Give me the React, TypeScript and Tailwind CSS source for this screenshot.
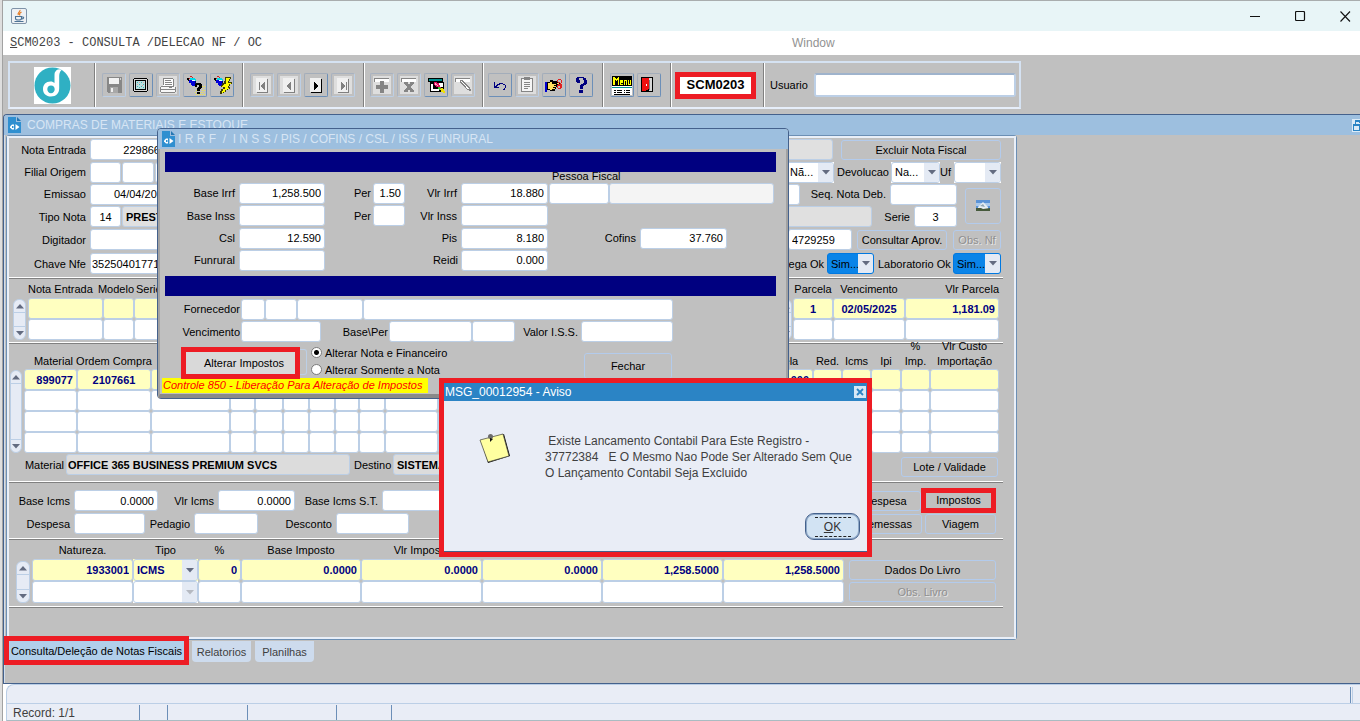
import type { ReactNode } from "react";

const NAVY = "#000080";

/* ---------- form primitives ---------- */

type FieldProps = { label: string; value?: string; className?: string };

function Field({ label, value = "", className = "" }: FieldProps) {
  return (
    <input
      type="text"
      aria-label={label}
      defaultValue={value}
      className={`h-[21px] min-w-0 shrink-0 rounded-[3px] border border-[#bccfe6] px-[3px] outline-none ${
        className.includes("bg-") ? "" : "bg-white"
      } ${className}`}
    />
  );
}

function Caption({ children, className = "" }: { children: ReactNode; className?: string }) {
  return <span className={`shrink-0 whitespace-nowrap ${className}`}>{children}</span>;
}

function FormButton({ children, className = "", disabled = false }: { children: ReactNode; className?: string; disabled?: boolean }) {
  return (
    <button
      type="button"
      disabled={disabled}
      className={`h-[20px] shrink-0 overflow-hidden whitespace-nowrap rounded-[3px] border border-[#b3cbec] text-center leading-[18px] ${
        disabled ? "text-[#8f8f8f] [text-shadow:1px_1px_0_#e6e6e6]" : ""
      } ${className}`}
    >
      {children}
    </button>
  );
}

function Arrow({ up = false, faded = false }: { up?: boolean; faded?: boolean }) {
  return (
    <svg width="8" height="5" viewBox="0 0 8 5" className="block" aria-hidden="true">
      <path d={up ? "M0 4.5h8L4 0z" : "M0 0h8L4 4.5z"} fill={faded ? "#b5b9c1" : "#636b80"} />
    </svg>
  );
}

type ComboProps = { label: string; value?: string; className?: string; selected?: boolean; faded?: boolean };

function Combo({ label, value = "", className = "", selected = false, faded = false }: ComboProps) {
  return (
    <span
      className={`flex h-[21px] shrink-0 overflow-hidden rounded-[3px] border ${
        selected ? "border-[#0078e0] bg-[#0a84e8]" : "border-[#bccfe6] bg-inherit"
      } ${className}`}
    >
      <select aria-label={label} className="min-w-0 flex-1 appearance-none bg-transparent pl-[3px] outline-none">
        <option>{value}</option>
      </select>
      <span className="pointer-events-none flex w-[15px] items-center justify-center bg-[#e4eaf4]">
        <Arrow faded={faded} />
      </span>
    </span>
  );
}

function Scroller({ className = "" }: { className?: string }) {
  return (
    <div className={`flex shrink-0 flex-col items-stretch rounded-[6px] border border-[#bccfe6] bg-[#e6ebf5] ${className}`}>
      <button type="button" aria-label="Anterior" className="flex h-[13px] items-center justify-center border-b border-[#bccfe6]">
        <Arrow up />
      </button>
      <span className="flex-1" />
      <button type="button" aria-label="Proximo" className="flex h-[13px] items-center justify-center border-t border-[#bccfe6]">
        <Arrow />
      </button>
    </div>
  );
}

function Divider() {
  return <div className="mr-[11px] h-[2px] border-t border-b border-t-white border-b-[#808080]" />;
}

/* ---------- data grid ---------- */

type Column = { title: ReactNode; width: string; head?: string; align?: string; value?: string; combo?: boolean };

type GridProps = { name: string; columns: Column[]; rows: number; headClass: string; rowClass: string; cellClass: string };

function Grid({ name, columns, rows, headClass, rowClass, cellClass }: GridProps) {
  return (
    <table aria-label={name} className="w-[1px] shrink-0 table-fixed border-collapse">
      <thead>
        <tr>
          {columns.map((c, i) => (
            <th key={i} className={`p-0 align-bottom font-normal ${c.width}`}>
              <span className={`flex items-end whitespace-nowrap ${headClass} ${c.head ?? "justify-center"}`}>{c.title}</span>
            </th>
          ))}
        </tr>
      </thead>
      <tbody>
        {Array.from({ length: rows }, (_, r) => (
          <tr key={r} className={rowClass}>
            {columns.map((c, i) => (
              <td key={i} className="p-0">
                {c.combo ? (
                  <span className={`block font-bold text-[#000080] ${r === 0 ? "bg-[#ffffc0]" : "bg-white"}`}>
                    <Combo label={`${name} ${i + 1}`} value={r === 0 ? c.value : ""} className={`w-full ${cellClass}`} faded={r > 0} />
                  </span>
                ) : (
                  <Field
                    label={`${name} ${r + 1}.${i + 1}`}
                    value={r === 0 ? c.value : ""}
                    className={`block w-full font-bold text-[#000080] ${cellClass} ${c.align ?? "text-right"} ${
                      r === 0 ? "bg-[#ffffc0]" : "bg-white"
                    }`}
                  />
                )}
              </td>
            ))}
          </tr>
        ))}
      </tbody>
    </table>
  );
}

/* ---------- toolbar ---------- */

function ToolButton({ label, children, off = false }: { label: string; children: ReactNode; off?: boolean }) {
  return (
    <button
      type="button"
      aria-label={label}
      className={`size-[24px] shrink-0 rounded-[2px] border ${
        off
          ? "border-t-[#a8b2c0] border-r-[#bccfe6] border-b-[#bccfe6] border-l-[#a8b2c0]"
          : "border-t-[#a3adba] border-r-[#6c8fb8] border-b-[#6c8fb8] border-l-[#a3adba]"
      }`}
    >
      <svg width="22" height="22" viewBox="0 0 22 22" shapeRendering="crispEdges" className="block" aria-hidden="true">
        {children}
      </svg>
    </button>
  );
}

function ToolGroup({ children, className = "" }: { children: ReactNode; className?: string }) {
  return (
    <div className={`flex h-full shrink-0 items-center gap-[3px] border-l border-[#808080] shadow-[inset_1px_0_0_#ffffff] ${className}`}>
      {children}
    </div>
  );
}

const Plate = () => <path d="M2 2h18v18H2z" fill="#dedede" />;

function NavGlyph({ d, active = false }: { d: string; active?: boolean }) {
  return (
    <>
      {!active && <Plate />}
      <path d="M5 4h11v14H5z" fill="#f0f0f0" />
      <path d="M16 5h1v14H6v-1h10z" fill={active ? "#000" : "#808080"} />
      <path d={d} fill={active ? "#000" : "#808080"} />
    </>
  );
}

function Dropper() {
  return (
    <>
      <path d="M6 2h2v1H6zM4 4h2v1H4zM8 3h1v1H8z" fill="#d02020" />
      <path d="M3 4h2v2H3zM4 6h2v1H4z" fill="#000" />
      <path d="M6 4h5v1h1v2h-1V6H8v1H6z" fill="#00d8e8" />
      <path d="M5 6h3v1h3v1h1v3h-1v1H8v-1H7V9H5z" fill="#0000d8" />
      <path d="M8 6h3v1H8z" fill="#f4ffff" />
      <path d="M11 7h1v4h-1z" fill="#000060" />
    </>
  );
}

function Toolbar() {
  return (
    <div className="mr-auto flex h-[48px] w-full max-w-[1013px] items-center border-2 border-[#d5e2f2] border-b-[#e6eefa]">
      <div className="flex h-full w-[84px] shrink-0 items-center justify-center">
        <svg width="37" height="37" viewBox="0 0 37 37" aria-label="Logo">
          <path d="M0 0h37v37H0z" fill="#fff" />
          <circle cx="18.500" cy="18.500" r="18" fill="#2fb0c3" />
          <path d="M21.500 4.500c1.500-2.500 4-3 6-1.500-2 2-2.300 4-2.300 7v11c0 5.500-3 8.500-8.200 8.500-4.800 0-8-3-8-7.300 0-4.700 3-7.700 7.500-7.700 1.800 0 3 .6 4 1.500V9c0-2.500 0-3.500 1-4.500z" fill="#fff" />
          <path d="M17 18.500c2.300 0 3.700 1.400 3.700 3.800S19.200 26.200 17 26.200s-3.700-1.500-3.700-3.900 1.400-3.800 3.700-3.800z" fill="#2fb0c3" />
        </svg>
      </div>
      <ToolGroup className="w-[148px] pl-[7px]">
        <ToolButton label="Salvar" off>
          <path d="M4 3h15v16H5v-1H4z" fill="#878787" />
          <path d="M6 4h10v6H6z" fill="#f2f2f2" />
          <path d="M17 4h1v2h-1z" fill="#d0d0d0" />
          <path d="M7 13h8v6H7z" fill="#a8a8a8" />
          <path d="M8 14h2v4H8z" fill="#efefef" />
        </ToolButton>
        <ToolButton label="Tela">
          <path d="M4 4h13v1h1v12h-1v1H4v-1H3V5h1z" fill="#000" />
          <path d="M4 5h13v12H4z" fill="#d8d8d8" />
          <path d="M5 6h11v10H5z" fill="#000" />
          <path d="M6 7h9v8H6z" fill="#b8dede" />
          <path d="M7 8h1v1H7zM9 10h1v1H9zM11 8h1v1h-1zM13 10h1v1h-1zM7 12h1v1H7zM11 12h1v1h-1zM9 13h1v1H9zM13 13h1v1h-1z" fill="#48b0b0" />
          <path d="M9 8h1v1H9zM12 11h1v1h-1zM7 10h1v1H7zM13 8h1v1h-1z" fill="#e0a0a0" />
        </ToolButton>
        <ToolButton label="Imprimir" off>
          <Plate />
          <path d="M6 4h10l1 8H6z" fill="#fff" />
          <path d="M6 4h10v1h1v7h-1V5H7v6H6zM8 6h6v1H8zM8 8h7v1H8zM8 10h7v1H8z" fill="#858585" />
          <path d="M4 12h14v1h1v4h-1v2H4z" fill="#f7f7f7" />
          <path d="M4 12h13v1H4zM3 15h15v1H3zM18 13h1v5h-1zM4 18h14v1H4zM3 13h1v5H3zM12 13h3v1h-3z" fill="#858585" />
        </ToolButton>
        <ToolButton label="Entrar consulta">
          <Dropper />
          <path d="M12 12h1v1h-1zM18 12h1v1h-1zM19 14h1v1h-1zM18 16h1v1h-1zM19 18h1v1h-1zM12 16h1v1h-1zM11 18h1v1h-1zM12 20h1v1h-1zM14 20h1v1h-1zM16 20h1v1h-1zM18 20h1v1h-1zM17 18h1v1h-1zM20 12h1v1h-1zM20 16h1v1h-1zM20 20h1v1h-1z" fill="#f0e840" />
          <path d="M12 9h5v1h1v4h-1v1h-1v2h-3v-3h1v-1h1v-2h-2v2h-2v-3h1zM13 18h3v2h-3z" fill="#000" />
        </ToolButton>
        <ToolButton label="Executar consulta">
          <Dropper />
          <path d="M14 3h6v2h-1v2h-1v1h3v2h-2v2h-1v1h1v2h-2v1h-2v2h-2v1h-2v1H9v-3h1v-2h2v-2h-2v-2h1V9h2V7h1z" fill="#404000" />
          <path d="M15 4h4v1h-1v2h-1v2h3v1h-2v2h-1v2h1v1h-2v1h-2v2h-2v1h-1v-2h1v-2h2v-2h-3v-1h1v-1h1v-1h2z" fill="#ffff00" />
        </ToolButton>
      </ToolGroup>
      <ToolGroup className="w-[121px] pl-[7px]">
        <ToolButton label="Primeiro" off>
          <NavGlyph d="M8 8h1v8H8zM13 8h1v8h-1v-1h-1v-1h-1v-1h-1v-2h1v-1h1V9h1z" />
        </ToolButton>
        <ToolButton label="Registro anterior" off>
          <NavGlyph d="M12 8h1v8h-1v-1h-1v-1h-1v-1H9v-2h1v-1h1V9h1z" />
        </ToolButton>
        <ToolButton label="Registro seguinte">
          <NavGlyph active d="M9 8h1v1h1v1h1v1h1v2h-1v1h-1v1h-1v1H9z" />
        </ToolButton>
        <ToolButton label="Ultimo" off>
          <NavGlyph d="M9 8h1v1h1v1h1v1h1v2h-1v1h-1v1h-1v1H9zM14 8h1v8h-1z" />
        </ToolButton>
      </ToolGroup>
      <ToolGroup className="w-[119px] pl-[6px]">
        <ToolButton label="Inserir" off>
          <Plate />
          <path d="M3 4h15v4H3z" fill="#fff" />
          <path d="M3 4h15v1H4v3H3zM9 7h4v4h4v4h-4v4H9v-4H5v-4h4z" fill="#858585" />
        </ToolButton>
        <ToolButton label="Remover" off>
          <Plate />
          <path d="M3 4h15v4H3z" fill="#fff" />
          <path d="M3 4h15v1H4v3H3zM6 8h4v2h2V8h4v2h-1v1h-1v1h-1v2h1v1h1v1h1v2h-4v-2h-2v2H6v-2h1v-1h1v-1h1v-2H8v-1H7v-1H6z" fill="#858585" />
        </ToolButton>
        <ToolButton label="Limpar registro">
          <path d="M3 4h15v4H3zM5 8h14v10H5z" fill="#000" />
          <path d="M4 5h13v2H4z" fill="#009090" />
          <path d="M6 10h2v5H6zM14 9h4v4h-4zM6 15h8v2H6z" fill="#fff" />
          <path d="M9 8h3v1h2v2h1v2h1v1h-3v-1h-2v-1h-1v-1H9z" fill="#e01060" />
          <path d="M10 9h1v1h1v1h1v1h-1v-1h-2z" fill="#ffb0d0" />
          <path d="M13 13h2v1h1v2h-2v-1h-1z" fill="#30c030" />
          <path d="M16 14h2v1h1v2h1v2h-2v-1h-2v-2h-1v-1h1z" fill="#f0e000" />
        </ToolButton>
        <ToolButton label="Limpar tela" off>
          <Plate />
          <path d="M3 4h15v4H3z" fill="#fff" />
          <path d="M3 4h15v1H4v3H3zM8 6h3v1h1v1h1v1h1v1h1v1h1v1h1v1h1v2h1v2h-2v-1h-2v-1h-1v-1h-1v-1h-1v-1h-1v-1h-1v-1h-1V9H8z" fill="#858585" />
          <path d="M9 7h1v1h1v1h1v1h1v1h1v1h-1v-1h-1v-1h-1V9h-1V8H9zM14 12h1v1h1v1h1v1h-2v-1h-1z" fill="#fff" />
        </ToolButton>
      </ToolGroup>
      <ToolGroup className="w-[120px] pl-[5px]">
        <ToolButton label="Desfazer">
          <path d="M5 8h1v4h1v-1h1v-1h2V9h4v1h2v1h1v3h-1v2h-2v-1h1v-1h1v-3h-2v-1h-3v1H9v1H8v1h2v1H5z" fill={NAVY} />
        </ToolButton>
        <ToolButton label="Lista de valores" off>
          <Plate />
          <path d="M5 4h12v14H5z" fill="#858585" />
          <path d="M6 5h10v12H6z" fill="#f5f5f5" />
          <path d="M8 3h6v3H8zM8 8h6v1H8zM8 10h6v1H8zM8 12h6v1H8zM8 14h4v1H8z" fill="#858585" />
        </ToolButton>
        <ToolButton label="Editar">
          <path d="M2 8h2v10H2z" fill="#0000d0" />
          <path d="M4 8h3V6h3v1h5v2h2v2h-3v2h-1v2h-1v2H7v-1H4z" fill="#000" />
          <path d="M5 9h2V8h2v2h5V9h2v1h-3v1h-2v1h2v1h-3v1h2v1h-3v1H7v-1H5z" fill="#ffe060" />
          <path d="M15 5h3v1h1v3h-1v1h1v4h-1v1h-3v-1h-1v-3h1v-1h2v-1h-2V8h-1V6h1z" fill="#e02020" />
          <path d="M15 6h3v3h-1V8h-2zM15 12h2v2h-2z" fill="#c0c0c0" />
        </ToolButton>
        <ToolButton label="Ajuda">
          <path d="M7 3h7v1h2v2h1v4h-1v1h-2v1h-1v3h-3v-4h1v-1h2V9h1V6h-1V4H9v2h1v3H7V8H6V4h1zM9 16h4v3H9z" fill={NAVY} />
        </ToolButton>
      </ToolGroup>
      <ToolGroup className="w-[68px] pl-[7px]">
        <ToolButton label="Menu">
          <path d="M1 2h20v10H1z" fill="#000" />
          <path d="M2 3h2v1h1v1h1V4h1V3h1v8H7V6H6v1H5V6H4v5H2zM9 6h3v3h-2v1h2v1H9zM13 6h3v5h-1V7h-1v4h-1zM17 6h1v4h1V6h1v5h-3z" fill="#ffff00" />
          <path d="M1 12h20v1H1z" fill="#fff" />
          <path d="M1 13h20v1H1z" fill="#009090" />
          <path d="M1 14h20v7H1z" fill="#fff" />
          <path d="M3 16h2v1H3zM6 16h5v1H6zM13 16h1v1h-1zM15 16h4v1h-4zM3 18h2v1H3zM6 18h5v1H6zM13 18h1v1h-1zM15 18h4v1h-4zM3 20h16v1H3z" fill="#000" />
        </ToolButton>
        <ToolButton label="Sair">
          <path d="M3 3h12v15H3z" fill="#000" />
          <path d="M4 4h7v11h-1v1H8v1H4z" fill="#f01010" />
          <path d="M11 4h3v13h-3z" fill="#d8d8d8" />
          <path d="M8 10h1v2H8z" fill="#fff" />
          <path d="M11 6h1v10h-1z" fill="#808080" />
        </ToolButton>
      </ToolGroup>
      <ToolGroup className="w-[93px] pl-[4px]">
        <strong className="flex h-[27px] w-[81px] items-center justify-center border-[5px] border-[#ed1c24] bg-white text-[13px]">SCM0203</strong>
      </ToolGroup>
      <ToolGroup className="flex-1 pr-[3px] pl-[6px]">
        <label htmlFor="usuario" className="w-[41px]">
          Usuario
        </label>
        <input id="usuario" type="text" className="h-[24px] min-w-0 flex-1 rounded-[3px] border-2 border-[#bccfe6] border-t-[#9fb3cc] bg-white px-1 outline-none" />
      </ToolGroup>
    </div>
  );
}

/* ---------- window decoration ---------- */

function WindowIcon() {
  return (
    <svg width="13" height="16" viewBox="0 0 13 16" className="shrink-0" aria-hidden="true">
      <path d="M0 0h8v5h5v11H0z" fill="#2f8fd0" />
      <path d="M9 0l4 4H9z" fill="#2577b3" />
      <path d="M2 9.500l2-2h2v5H4l-2-2z" fill="#fff" />
      <path d="M4 9h1.500v2H4z" fill="#2f8fd0" />
      <path d="M7.500 7l4 3-4 3z" fill="#fff" />
    </svg>
  );
}

function TitleBar() {
  return (
    <header className="flex h-[31px] items-center border-t border-[#a9adae] bg-[#e8f5f7] pr-[9px] pl-[8px]">
      <svg width="16" height="16" viewBox="0 0 16 16" aria-hidden="true">
        <rect x=".5" y=".5" width="15" height="15" rx="1.500" fill="#eef1f4" stroke="#7f93a8" />
        <path d="M9 2C9.500 4 6 4.500 7.300 7M10.500 4c-2 1-2.500 2-1.500 3.500" stroke="#e57a1f" strokeWidth="1.200" fill="none" />
        <path d="M4.500 8.500h6v2c0 1-1 1.500-3 1.500s-3-.5-3-1.500zM10.500 9h1.500c1 0 1 1.800-1.500 2M3.500 13.500h9" stroke="#4d7395" strokeWidth="1.100" fill="none" />
      </svg>
      <div className="ml-auto flex items-center gap-[34px]">
        <button type="button" aria-label="Minimizar">
          <svg width="11" height="11" viewBox="0 0 11 11"><path d="M0 5.500h10" stroke="#111" /></svg>
        </button>
        <button type="button" aria-label="Maximizar">
          <svg width="11" height="11" viewBox="0 0 11 11"><rect x=".5" y=".5" width="9" height="9" rx="1" fill="none" stroke="#111" strokeWidth="1.200" /></svg>
        </button>
        <button type="button" aria-label="Fechar janela">
          <svg width="11" height="11" viewBox="0 0 11 11"><path d="M.5.500l9.500 10M10 .500L.5 10.500" stroke="#111" strokeWidth="1.100" /></svg>
        </button>
      </div>
    </header>
  );
}

/* ---------- main form ---------- */

function InvoiceHeader() {
  return (
    <section className="flex justify-between pr-[13px] pb-[1px]">
      <div>
        <div className="flex h-[23px] items-center gap-1">
          <Caption className="w-[77px] text-right">Nota Entrada</Caption>
          <Field label="Nota Entrada" value="229866" className="w-[74px] text-right" />
        </div>
        <div className="flex h-[22px] items-center gap-1">
          <Caption className="w-[77px] text-right">Filial Origem</Caption>
          <div className="flex gap-[1px]">
            <Field label="Filial" className="w-[31px]" />
            <Field label="Filial codigo" className="w-[32px]" />
            <Field label="Filial nome" className="w-[60px]" />
          </div>
        </div>
        <div className="flex h-[22px] items-center gap-1">
          <Caption className="w-[77px] text-right">Emissao</Caption>
          <Field label="Emissao" value="04/04/2025" className="w-[83px] text-right" />
        </div>
        <div className="flex h-[23px] items-center gap-1">
          <Caption className="w-[77px] text-right">Tipo Nota</Caption>
          <div className="flex gap-[1px]">
            <Field label="Tipo Nota" value="14" className="w-[31px] text-center" />
            <Field label="Tipo descricao" value="PRESTACAO" className="w-[90px] bg-[#e0e0e0] font-bold" />
          </div>
        </div>
        <div className="flex h-[23px] items-center gap-1">
          <Caption className="w-[77px] text-right">Digitador</Caption>
          <Field label="Digitador" className="w-[90px]" />
        </div>
        <div className="flex h-[25px] items-center gap-1">
          <Caption className="w-[77px] text-right">Chave Nfe</Caption>
          <Field label="Chave Nfe" value="35250401771" className="w-[90px] px-px" />
        </div>
      </div>

      <div className="flex flex-col items-end">
        <div className="flex h-[23px] items-center gap-2">
          <Field label="Situacao" className="w-[90px] bg-[#e0e0e0]" />
          <FormButton className="w-[160px]">Excluir Nota Fiscal</FormButton>
        </div>
        <div className="flex h-[22px] items-center bg-inherit">
          <span className="bg-white"><Combo label="Nota" value="Nã..." className="w-[48px]" /></span>
          <Caption className="w-[57px] px-[3px]">Devolucao</Caption>
          <span className="bg-white"><Combo label="Devolucao" value="Na..." className="w-[49px]" /></span>
          <Caption className="w-[14px]">Uf</Caption>
          <span className="bg-white"><Combo label="Uf" className="w-[47px]" /></span>
        </div>
        <div className="flex items-center gap-2">
          <div className="flex flex-col items-end">
            <div className="flex h-[22px] items-center">
              <Field label="Nota Deb." className="w-[60px]" />
              <Caption className="w-[90px] pr-[4px] text-right">Seq. Nota Deb.</Caption>
              <Field label="Seq. Nota Deb." className="w-[67px]" />
            </div>
            <div className="flex h-[23px] items-center">
              <Field label="Descricao" className="w-[140px] bg-[#e0e0e0]" />
              <Caption className="w-[42px] pr-[4px] text-right">Serie</Caption>
              <Field label="Serie" value="3" className="w-[43px] text-center" />
            </div>
          </div>
          <button type="button" aria-label="Imagem" className="flex h-[36px] w-[36px] items-center justify-center rounded-[3px] border border-[#b3cbec]">
            <svg width="14" height="11" viewBox="0 0 14 11" aria-hidden="true">
              <path d="M0 0h14v11H0z" fill="#5b93d6" />
              <path d="M0 3h14v3H0z" fill="#a9c9ec" />
              <path d="M2 7l5-5 5 5v2H2z" fill="#e6edf2" />
              <path d="M4 6l3-2 2 3z" fill="#8fa6b5" />
              <path d="M0 8h5l2 1 7-1v3H0z" fill="#465a3c" />
            </svg>
          </button>
        </div>
        <div className="flex h-[23px] items-center">
          <Field label="Titulo" value="4729259" className="w-[64px]" />
          <FormButton className="ml-[5px] w-[90px]">Consultar Aprov.</FormButton>
          <FormButton disabled className="ml-[6px] w-[48px]">Obs. Nf</FormButton>
        </div>
        <div className="flex h-[25px] items-center gap-[3px]">
          <Caption>Entrega Ok</Caption>
          <Combo label="Entrega Ok" value="Sim..." selected className="w-[47px]" />
          <Caption className="w-[73px] pl-[1px]">Laboratorio Ok</Caption>
          <Combo label="Laboratorio Ok" value="Sim..." selected className="w-[48px]" />
        </div>
      </div>
    </section>
  );
}

const noteColumns: Column[] = [
  { title: "Nota Entrada", width: "w-[75px]", head: "justify-start" },
  { title: "Modelo", width: "w-[31px]", head: "justify-end" },
  { title: "Serie", width: "w-[66px]", head: "justify-start pl-[2px]" },
];

const parcelColumns: Column[] = [
  { title: "Parcela", width: "w-[40px]", align: "text-center", value: "1" },
  { title: "Vencimento", width: "w-[72px]", align: "text-center", value: "02/05/2025" },
  { title: "Vlr Parcela", width: "w-[94px]", head: "justify-end", value: "1,181.09" },
];

const itemColumns: Column[] = [
  { title: "Material", width: "w-[53px]", head: "justify-end pr-1", value: "899077" },
  { title: "Ordem Compra", width: "w-[74px]", align: "text-center", value: "2107661" },
  { title: "", width: "w-[79px]" },
  { title: "", width: "w-[25px]" },
  { title: "", width: "w-[28px]" },
  { title: "", width: "w-[26px]" },
  { title: "", width: "w-[26px]" },
  { title: "", width: "w-[24px]" },
  { title: "", width: "w-[26px]" },
  { title: "", width: "w-[53px]" },
  { title: "", width: "w-[123px]" },
  { title: "", width: "w-[120px]" },
  { title: "", width: "w-[70px]" },
  { title: "Tabela", width: "w-[62px]", value: "1.000" },
  { title: "Red.", width: "w-[29px]" },
  { title: "Icms", width: "w-[29px]" },
  { title: "Ipi", width: "w-[30px]" },
  { title: <>%<br />Imp.</>, width: "w-[29px]" },
  { title: <>Vlr Custo<br />Importação</>, width: "w-[69px]" },
];

const taxColumns: Column[] = [
  { title: "Natureza.", width: "w-[101px]", value: "1933001" },
  { title: "Tipo", width: "w-[65px]", combo: true, value: "ICMS" },
  { title: "%", width: "w-[43px]", value: "0" },
  { title: "Base Imposto", width: "w-[120px]", value: "0.0000" },
  { title: "Vlr Imposto", width: "w-[121px]", value: "0.0000" },
  { title: "Valor Isento", width: "w-[120px]", value: "0.0000" },
  { title: "Valor Outros", width: "w-[121px]", value: "1,258.5000" },
  { title: "Valor Contabil", width: "w-[121px]", value: "1,258.5000" },
];

function MainPanel() {
  return (
    <div className="w-full max-w-[1011px] rounded-[3px] border border-[#6c8fb4]">
      <div className="border-2 border-[#e9eff8] pb-[29px]">
        <InvoiceHeader />
        <Divider />
        <section className="flex items-end justify-between pr-[15px] pb-[2px]">
          <div className="flex items-end gap-[2px] pl-[4px]">
            <Scroller className="h-[41px] w-[13px]" />
            <Grid name="Notas" columns={noteColumns} rows={2} headClass="h-[19px] leading-[18px]" rowClass="h-[21px]" cellClass="h-[21px]" />
          </div>
          <div className="flex items-end gap-[1px]">
            <Scroller className="h-[41px] w-[13px]" />
            <Grid name="Parcelas" columns={parcelColumns} rows={2} headClass="h-[19px] leading-[18px]" rowClass="h-[21px]" cellClass="h-[21px]" />
          </div>
        </section>
        <Divider />
        <section className="flex items-end gap-[2px] pl-[1px] text-center">
          <Scroller className="h-[83px] w-[12px]" />
          <Grid name="Itens" columns={itemColumns} rows={4} headClass="h-[25px] leading-[15px]" rowClass="h-[21px]" cellClass="h-[21px]" />
        </section>
        <section className="flex h-[28px] items-center pr-[16px] pb-[5px]">
          <Caption className="w-[57px] pr-[2px] text-right">Material</Caption>
          <Field label="Material descricao" value="OFFICE 365 BUSINESS PREMIUM SVCS" className="w-[284px] bg-[#dcdcdc] px-px font-bold" />
          <Caption className="w-[43px] px-[4px]">Destino</Caption>
          <Field label="Destino" value="SISTEMAS" className="w-[200px] bg-[#dcdcdc] px-[2px] font-bold" />
          <FormButton className="mt-[5px] ml-auto w-[97px]">Lote / Validade</FormButton>
        </section>
        <Divider />
        <section className="flex justify-between pt-[6px] pr-[18px] pb-[3px]">
          <div>
            <div className="flex h-[23px] items-center">
              <Caption className="w-[65px] pr-[4px] text-right">Base Icms</Caption>
              <Field label="Base Icms" value="0.0000" className="w-[84px] text-right" />
              <Caption className="w-[60px] pr-[4px] text-right">Vlr Icms</Caption>
              <Field label="Vlr Icms" value="0.0000" className="w-[77px] text-right" />
              <Caption className="w-[87px] pr-[4px] text-right">Base Icms S.T.</Caption>
              <Field label="Base Icms S.T." className="w-[80px]" />
            </div>
            <div className="flex h-[23px] items-center">
              <Caption className="w-[65px] pr-[4px] text-right">Despesa</Caption>
              <Field label="Despesa" className="w-[71px]" />
              <Caption className="w-[49px] pr-[4px] text-right">Pedagio</Caption>
              <Field label="Pedagio" className="w-[64px]" />
              <Caption className="w-[78px] pr-[4px] text-right">Desconto</Caption>
              <Field label="Desconto" className="w-[73px]" />
            </div>
          </div>
          <div className="flex flex-col items-end">
            <div className="flex h-[23px] items-center">
              <FormButton className="w-[72px]">Despesa</FormButton>
              <button type="button" className="-my-1 h-[25px] w-[75px] border-[5px] border-[#ed1c24] leading-[15px]">
                Impostos
              </button>
            </div>
            <div className="flex h-[23px] items-center gap-[3px]">
              <FormButton className="w-[72px]">Remessas</FormButton>
              <FormButton className="w-[71px]">Viagem</FormButton>
            </div>
          </div>
        </section>
        <Divider />
        <section className="flex items-end gap-[2px] pr-[18px] pb-[3px] pl-[7px]">
          <Scroller className="h-[42px] w-[14px]" />
          <Grid name="Impostos" columns={taxColumns} rows={2} headClass="h-[19px] leading-[18px]" rowClass="h-[22px]" cellClass="h-[22px]" />
          <div className="ml-auto flex w-[147px] flex-col gap-[2px] pb-[1px]">
            <FormButton>Dados Do Livro</FormButton>
            <FormButton disabled>Obs. Livro</FormButton>
          </div>
        </section>
        <Divider />
      </div>
    </div>
  );
}

/* ---------- withheld-tax window ---------- */

function TaxWindow() {
  return (
    <div className="absolute top-[13px] left-[153px] w-[632px] rounded-[4px] border border-[#44618c] bg-[#c0c0c0]">
      <div className="flex h-[20px] items-center gap-[3px] rounded-t-[3px] bg-[#9dbfdf] pl-[4px] text-[12px] text-[#d7e5f4]">
        <WindowIcon />
        <span className="whitespace-pre">I R R F  /  I N S S / PIS / COFINS / CSL / ISS / FUNRURAL</span>
      </div>
      <div className="border-x-2 border-b-[4px] border-x-[#a2a2a2] border-b-[#8a8a8a] pt-[3px]">
        <div className="mr-[10px] ml-[5px] h-[20px] bg-[#000080]" />
        <div className="h-[10px] pl-[392px] leading-[9px]">Pessoa Fiscal</div>
        <div className="flex h-[22px] items-center">
          <Caption className="w-[79px] pr-[4px] text-right">Base Irrf</Caption>
          <Field label="Base Irrf" value="1,258.500" className="w-[86px] text-right" />
          <Caption className="w-[48px] pr-[2px] text-right">Per</Caption>
          <Field label="Per Irrf" value="1.50" className="w-[32px] text-right" />
          <Caption className="w-[56px] pr-[4px] text-right">Vlr Irrf</Caption>
          <Field label="Vlr Irrf" value="18.880" className="w-[87px] text-right" />
          <Field label="Pessoa Fiscal" className="ml-[1px] w-[60px]" />
          <Field label="Pessoa Fiscal nome" className="w-[165px] bg-[#f4f4f4]" />
        </div>
        <div className="flex h-[23px] items-center">
          <Caption className="w-[79px] pr-[4px] text-right">Base Inss</Caption>
          <Field label="Base Inss" className="w-[86px] text-right" />
          <Caption className="w-[48px] pr-[2px] text-right">Per</Caption>
          <Field label="Per Inss" className="w-[32px] text-right" />
          <Caption className="w-[56px] pr-[4px] text-right">Vlr Inss</Caption>
          <Field label="Vlr Inss" className="w-[87px] text-right" />
        </div>
        <div className="flex h-[22px] items-center">
          <Caption className="w-[79px] pr-[4px] text-right">Csl</Caption>
          <Field label="Csl" value="12.590" className="w-[86px] text-right" />
          <Caption className="w-[136px] pr-[4px] text-right">Pis</Caption>
          <Field label="Pis" value="8.180" className="w-[87px] text-right" />
          <Caption className="w-[92px] pr-[4px] text-right">Cofins</Caption>
          <Field label="Cofins" value="37.760" className="w-[87px] text-right" />
        </div>
        <div className="flex h-[22px] items-center">
          <Caption className="w-[79px] pr-[4px] text-right">Funrural</Caption>
          <Field label="Funrural" className="w-[86px] text-right" />
          <Caption className="w-[136px] pr-[3px] text-right">Reidi</Caption>
          <Field label="Reidi" value="0.000" className="w-[87px] text-right" />
        </div>
        <div className="mt-[5px] mr-[10px] mb-[2px] ml-[5px] h-[20px] bg-[#000080]" />
        <div className="flex h-[22px] items-center">
          <Caption className="w-[81px] pr-[1px] text-right">Fornecedor</Caption>
          <Field label="Fornecedor" className="w-[24px]" />
          <Field label="Fornecedor filial" className="w-[32px]" />
          <Field label="Fornecedor codigo" className="w-[66px]" />
          <Field label="Fornecedor nome" className="w-[310px]" />
        </div>
        <div className="flex h-[23px] items-center">
          <Caption className="w-[81px] pr-[1px] text-right">Vencimento</Caption>
          <Field label="Vencimento" className="w-[80px]" />
          <Caption className="w-[68px] pr-[1px] text-right">Base\Per</Caption>
          <Field label="Base" className="w-[83px]" />
          <Field label="Percentual" className="w-[43px]" />
          <Caption className="w-[66px] pr-[3px] text-right">Valor I.S.S.</Caption>
          <Field label="Valor I.S.S." className="w-[92px]" />
        </div>
        <div className="flex h-[35px] items-start pt-[1px] pl-[21px]">
          <button type="button" className="mt-[3px] h-[32px] w-[119px] shrink-0 border-[5px] border-[#ed1c24] bg-[#d9d9d9] pl-[7px]">
            Alterar Impostos
          </button>
          <span className="mt-[5px] h-[26px] w-[7px] rounded-r-[3px] border border-l-0 border-[#bccfe6]" />
          <fieldset className="ml-[4px] flex flex-col">
            <label className="flex h-[17px] items-center gap-[3px] whitespace-nowrap">
              <input type="radio" name="escopo" defaultChecked className="size-[11px] appearance-none rounded-full border border-[#7a7a7a] bg-white bg-[radial-gradient(circle,#000_0_2px,#fff_3px)]" />
              Alterar Nota e Financeiro
            </label>
            <label className="flex h-[17px] items-center gap-[3px] whitespace-nowrap">
              <input type="radio" name="escopo" className="size-[11px] appearance-none rounded-full border border-[#7a7a7a] bg-white" />
              Alterar Somente a Nota
            </label>
          </fieldset>
          <button type="button" className="mt-[9px] mr-[114px] ml-auto h-[26px] w-[88px] rounded-[3px] border border-[#b3cbec]">
            Fechar
          </button>
        </div>
        <p className="mb-[1px] ml-[2px] h-[15px] w-[266px] bg-[#ffff00] pl-px leading-[15px] whitespace-nowrap text-[#ff0000] italic">
          Controle 850 - Liberação Para Alteração de Impostos
        </p>
      </div>
    </div>
  );
}

/* ---------- alert ---------- */

function AlertWindow() {
  return (
    <div role="alertdialog" aria-label="Aviso" className="absolute top-[263px] left-[435px] w-[433px] border-[5px] border-[#ed1c24] bg-[#e9edf6]">
      <div className="flex h-[18px] items-center justify-between bg-[#2b84c5] pr-[1px] pl-[1px] text-[12px] text-white">
        MSG_00012954 - Aviso
        <button type="button" aria-label="Fechar aviso" className="flex size-[12px] items-center justify-center bg-[#d7e8f6]">
          <svg width="8" height="8" viewBox="0 0 8 8"><path d="M1 1l6 6M7 1L1 7" stroke="#2b84c5" strokeWidth="1.800" /></svg>
        </button>
      </div>
      <div className="flex h-[112px] pt-[32px] pl-[35px]">
        <svg width="33" height="33" viewBox="0 0 33 33" className="shrink-0" aria-hidden="true">
          <path d="M2 8L25 1l6 22-22 7z" fill="#000" />
          <path d="M1 7l23-6 6 22-21 6z" fill="#ffffa0" stroke="#55554a" strokeWidth=".8" />
          <circle cx="11.500" cy="3.500" r="2.500" fill="#6b6b6b" />
          <path d="M11 5l3 1-3 3z" fill="#111" />
        </svg>
        <p className="ml-[33px] text-[12px] leading-[16px] whitespace-pre text-[#3f3f3f]">
          {" Existe Lancamento Contabil Para Este Registro -\n37772384   E O Mesmo Nao Pode Ser Alterado Sem Que\nO Lançamento Contabil Seja Excluido"}
        </p>
      </div>
      <div className="flex h-[39px] items-start justify-end border-b border-[#44618c] pr-[7px]">
        <button
          type="button"
          className="flex h-[27px] w-[55px] items-center justify-center rounded-[9px] border border-[#44618c] bg-[#d2e3f3] text-[12px] text-[#333] shadow-[inset_0_0_0_1px_#8fa9c8]"
        >
          <span className="flex h-[20px] w-[36px] items-center justify-center border-y border-dashed border-[#222]">
            <span><u>O</u>K</span>
          </span>
        </button>
      </div>
    </div>
  );
}

/* ---------- page ---------- */

export default function App() {
  return (
    <div className="flex min-h-screen overflow-hidden bg-[#dedede] font-['Liberation_Sans',Arial,sans-serif] text-[11px] leading-[14px] text-black">
      <div className="ml-[2px] flex min-w-0 flex-1 flex-col border-l border-[#a2a2a2] bg-[#c0c0c0]">
        <TitleBar />
        <nav className="flex h-[24px] items-center bg-white pl-[7px]">
          <a href="#consulta" className="w-[782px] font-['Liberation_Mono','Courier_New',monospace] text-[12px] whitespace-nowrap text-[#444]">
            <u>S</u>CM0203 - CONSULTA /DELECAO NF / OC
          </a>
          <a href="#window" className="text-[12px] text-[#929292]">Window</a>
        </nav>
        <div className="pt-[6px] pr-[6px] pb-[5px] pl-[5px]">
          <Toolbar />
        </div>

        <main className="relative flex flex-1 flex-col rounded-tl-[4px] border-t border-b border-l border-[#44618c]">
          <div className="flex h-[20px] shrink-0 items-center gap-[6px] rounded-tl-[3px] bg-[#9dbfdf] pl-[4px] text-[12px] text-[#d7e5f4]">
            <WindowIcon />
            <span className="whitespace-nowrap">COMPRAS DE MATERIAIS E ESTOQUE</span>
            <button type="button" aria-label="Restaurar" className="ml-auto h-[13px] w-[8px] overflow-hidden bg-[#dcebf7]">
              <svg width="8" height="13" viewBox="0 0 8 13">
                <path d="M3 1h5v3H7V3H4v2H3zM1 5h7v7H1zm1 2v4h5V7z" fill="#2b84c5" fillRule="evenodd" />
              </svg>
            </button>
          </div>
          <div className="flex flex-1 flex-col border-l border-[#d3deeb] pl-[1px]">
            <MainPanel />
            <div role="tablist" className="relative -mt-1 -ml-[2px] flex items-start">
              <button type="button" role="tab" aria-selected="true" className="h-[29px] w-[185px] border-[5px] border-[#ed1c24] bg-[#b1cfea] whitespace-nowrap">
                Consulta/Deleção de Notas Fiscais
              </button>
              <button type="button" role="tab" className="mt-[5px] ml-[3px] h-[21px] w-[59px] rounded-b-[4px] bg-[#cddbed] text-[#3f3f3f]">
                Relatorios
              </button>
              <button type="button" role="tab" className="mt-[5px] ml-[4px] h-[21px] w-[59px] rounded-b-[4px] bg-[#cddbed] text-[#3f3f3f]">
                Planilhas
              </button>
            </div>
          </div>
          <TaxWindow />
          <AlertWindow />
        </main>

        <footer className="bg-white pl-[3px]">
          <div className="rounded-tl-[8px] border-t border-b border-l border-[#b9cde5] border-b-[#a9bcc2] bg-[#e9edf6] text-[12px] text-[#3f3f3f]">
            <div className="flex h-[19px] items-stretch justify-end border-b border-[#bccfe6] pt-[2px] pr-[7px]">
              <span className="w-[3px] border-r border-l border-r-[#bccfe6] border-l-[#6c8fb8]" />
            </div>
            <div className="flex h-[16px] items-stretch pt-[1px] pl-[6px]">
              <span className="w-[127px] border-r border-[#6c8fb8] leading-[16px]">Record: 1/1</span>
              <span className="w-[28px] border-r border-[#6c8fb8]" />
              <span className="w-[80px] border-r border-[#6c8fb8]" />
              <span className="w-[89px] border-r border-[#6c8fb8]" />
              <span className="w-[55px] border-r border-[#6c8fb8]" />
            </div>
          </div>
        </footer>
      </div>
    </div>
  );
}
